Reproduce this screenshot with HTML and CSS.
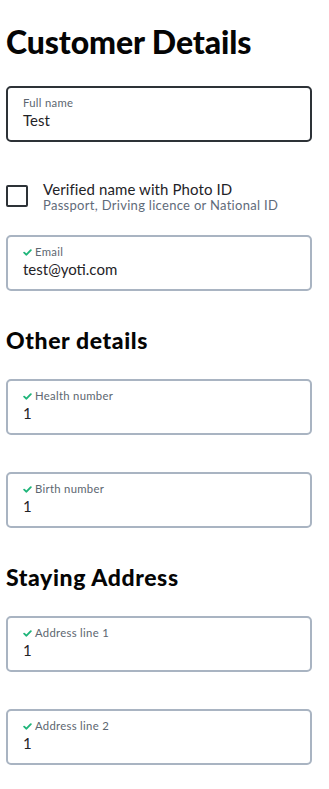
FILE: index.html
```html
<!DOCTYPE html>
<html lang="en">
<head>
<meta charset="utf-8">
<title>Customer Details</title>
<link rel="stylesheet" href="styles.css">
</head>
<body>
<main class="page">
  <h1 class="title">Customer Details</h1>

  <div class="field field--active">
    <div class="field__label">Full name</div>
    <div class="field__value">Test</div>
  </div>

  <label class="check">
    <span class="check__box"></span>
    <span class="check__text">
      <span class="check__title">Verified name with Photo ID</span>
      <span class="check__sub">Passport, Driving licence or National ID</span>
    </span>
  </label>

  <div class="field field--email">
    <div class="field__label"><svg class="tick" viewBox="0 0 10 8" width="9" height="7"><path d="M1.2 4.2 L3.8 6.5 L8.8 1.3" fill="none" stroke="#1fb57a" stroke-width="2.1" stroke-linecap="round" stroke-linejoin="round"/></svg>Email</div>
    <div class="field__value">test@yoti.com</div>
  </div>

  <h2 class="section">Other details</h2>

  <div class="field">
    <div class="field__label"><svg class="tick" viewBox="0 0 10 8" width="9" height="7"><path d="M1.2 4.2 L3.8 6.5 L8.8 1.3" fill="none" stroke="#1fb57a" stroke-width="2.1" stroke-linecap="round" stroke-linejoin="round"/></svg>Health number</div>
    <div class="field__value">1</div>
  </div>

  <div class="field">
    <div class="field__label"><svg class="tick" viewBox="0 0 10 8" width="9" height="7"><path d="M1.2 4.2 L3.8 6.5 L8.8 1.3" fill="none" stroke="#1fb57a" stroke-width="2.1" stroke-linecap="round" stroke-linejoin="round"/></svg>Birth number</div>
    <div class="field__value">1</div>
  </div>

  <h2 class="section">Staying Address</h2>

  <div class="field">
    <div class="field__label"><svg class="tick" viewBox="0 0 10 8" width="9" height="7"><path d="M1.2 4.2 L3.8 6.5 L8.8 1.3" fill="none" stroke="#1fb57a" stroke-width="2.1" stroke-linecap="round" stroke-linejoin="round"/></svg>Address line 1</div>
    <div class="field__value">1</div>
  </div>

  <div class="field">
    <div class="field__label"><svg class="tick" viewBox="0 0 10 8" width="9" height="7"><path d="M1.2 4.2 L3.8 6.5 L8.8 1.3" fill="none" stroke="#1fb57a" stroke-width="2.1" stroke-linecap="round" stroke-linejoin="round"/></svg>Address line 2</div>
    <div class="field__value">1</div>
  </div>
</main>
</body>
</html>
```

FILE: styles.css
```css
* { box-sizing: border-box; }

html, body {
  margin: 0;
  padding: 0;
  background: #ffffff;
}

body {
  font-family: "Lato", "Liberation Sans", sans-serif;
  color: #1f2327;
}

.page {
  width: 312px;
  padding: 0 0 0 6px;
  display: flex;
  flex-direction: column;
}

.title {
  margin: 22px 0 0;
  font-size: 32px;
  line-height: 40px;
  font-weight: 900;
  color: #050505;
  letter-spacing: -0.1px;
}

.section {
  margin: 35px 0 0;
  font-size: 23px;
  line-height: 28px;
  font-weight: 900;
  color: #050505;
  letter-spacing: 0.6px;
}

.field {
  height: 56px;
  border: 2px solid #a9b4c2;
  border-radius: 5px;
  padding: 8px 15px 0;
  margin-top: 37px;
  display: flex;
  flex-direction: column;
}

.title + .field { margin-top: 24px; }
.section + .field { margin-top: 25px; }
.check + .field { margin-top: 22px; }

.field--active {
  border-color: #2d3237;
}

.field__label {
  display: flex;
  align-items: center;
  font-size: 11.3px;
  line-height: 14px;
  letter-spacing: 0.3px;
  color: #5c6670;
}

.tick {
  margin-right: 3px;
  flex: none;
}

.field__value {
  font-size: 15px;
  line-height: 20px;
  color: #1f2327;
}

.check {
  margin-top: 39px;
  display: flex;
  align-items: flex-start;
  gap: 15px;
}

.check__box {
  flex: none;
  width: 22px;
  height: 22px;
  margin-top: 4px;
  border: 2px solid #2d3237;
  border-radius: 2px;
}

.check__text {
  display: flex;
  flex-direction: column;
}

.check__title {
  font-size: 15px;
  line-height: 16px;
  letter-spacing: 0.1px;
  color: #1f2327;
}

.check__sub {
  font-size: 13px;
  line-height: 16px;
  letter-spacing: 0.3px;
  color: #5f6b7a;
}
```
